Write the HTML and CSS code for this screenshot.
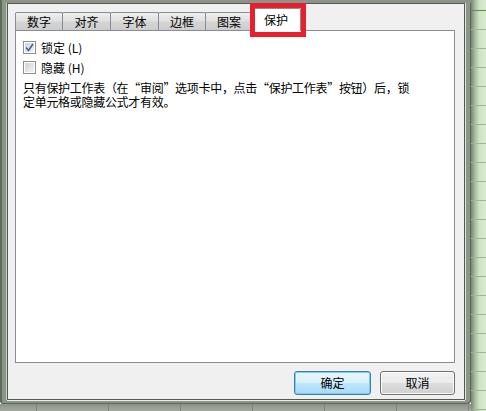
FILE: index.html
```html
<!DOCTYPE html>
<html lang="zh-CN">
<head>
<meta charset="utf-8">
<link rel="stylesheet" href="styles.css">
</head>
<body>
<div class="desk">
  <div class="window">
    <div class="client">
      <div class="tabs">
        <div class="tab t1">数字</div>
        <div class="tab t2">对齐</div>
        <div class="tab t3">字体</div>
        <div class="tab t4">边框</div>
        <div class="tab t5">图案</div>
        <div class="tab active">保护</div>
      </div>
      <div class="panel">
        <div class="check-row">
          <span class="box checked">
            <svg width="9" height="9" viewBox="0 0 9 9"><path d="M1 4.5 L3.5 7.5 L8 1" fill="none" stroke="#4a5d8e" stroke-width="1.6"/></svg>
          </span>
          <span class="label">锁定 (L)</span>
        </div>
        <div class="check-row">
          <span class="box"></span>
          <span class="label">隐藏 (H)</span>
        </div>
        <p class="note"><span class="line">只有保护工作表（在“审阅”选项卡中，点击“保护工作表”按钮）后，锁</span><span class="line">定单元格或隐藏公式才有效。</span></p>
      </div>
      <div class="buttons">
        <button class="btn default">确定</button>
        <button class="btn">取消</button>
      </div>
    </div>
    <div class="highlight"></div>
  </div>
  <div class="sheet"></div>
  <div class="strip"></div>
</div>
</body>
</html>
```

FILE: styles.css
```css
html, body {
  margin: 0;
  padding: 0;
}
body {
  width: 486px;
  height: 411px;
  overflow: hidden;
  font-family: "Noto Sans CJK SC", "Liberation Sans", sans-serif;
  font-size: 12px;
  color: #000;
}
.desk {
  display: grid;
  grid-template-columns: 471px 15px;
  grid-template-rows: 404px 7px;
  width: 486px;
  height: 411px;
}
.window {
  position: relative;
  grid-column: 1;
  grid-row: 1;
  box-sizing: border-box;
  padding: 3px 6px 4px 7px;
  background: #8a9686;
  box-shadow: inset 2px 0 0 #5e6a5b, inset 0 3px 0 #8d9389, inset -1px -1px 0 #5e665b;
  border-radius: 0 0 4px 4px;
}
.client {
  box-sizing: border-box;
  height: 397px;
  border: 1px solid #55594f;
  box-shadow: -1px 0 0 #c6cdc3, 1px 0 0 #dfe3dd, 0 1px 0 #e8ebe6;
  background: #f0f0f0;
  padding: 8px 9px 0 7px;
  display: flex;
  flex-direction: column;
}
.tabs {
  display: flex;
  height: 18px;
  align-items: flex-end;
  position: relative;
  z-index: 1;
}
.tab {
  box-sizing: border-box;
  height: 18px;
  border: 1px solid #898c95;
  border-bottom: none;
  margin-right: -1px;
  background: linear-gradient(#eeeeee, #e0e0e0 45%, #d4d4d4 55%, #cdcdcd);
  text-align: center;
  line-height: 18px;
  border-radius: 2px 2px 0 0;
}
.t1 { width: 48px; }
.t2 { width: 49px; }
.t3 { width: 49px; }
.t4 { width: 48px; }
.t5 { width: 48px; }
.tab.active {
  width: 50px;
  height: 23px;
  margin-left: -1px;
  margin-bottom: -1px;
  background: #fff;
  line-height: 22px;
}
.panel {
  box-sizing: border-box;
  height: 333px;
  border: 1px solid #898c95;
  background: #fff;
  padding: 10px 8px 0 7px;
}
.check-row {
  display: flex;
  align-items: center;
  height: 13px;
  margin-bottom: 7px;
}
.box {
  box-sizing: border-box;
  width: 13px;
  height: 13px;
  border: 1px solid #8e8f8f;
  background: linear-gradient(135deg, #cbcfd5, #f6f6f6);
  box-shadow: inset 0 0 0 1px #fff;
  display: flex;
  align-items: center;
  justify-content: center;
  margin-right: 5px;
}
.box svg { display: block; }
.label {
  line-height: 13px;
}
.note {
  margin: 0;
  line-height: 14px;
  letter-spacing: -0.3px;
  white-space: nowrap;
}
.line {
  display: block;
  height: 14px;
}
.buttons {
  display: flex;
  justify-content: flex-end;
  gap: 9px;
  margin-top: 8px;
}
.btn {
  box-sizing: border-box;
  width: 75px;
  height: 24px;
  border: 1px solid #707070;
  border-radius: 3px;
  background: linear-gradient(#f2f2f2, #ebebeb 48%, #dddddd 52%, #cfcfcf);
  box-shadow: inset 0 0 0 1px #fbfbfb;
  font-family: "Noto Sans CJK SC", sans-serif;
  font-size: 12px;
  color: #000;
  padding: 0;
  line-height: 22px;
}
.btn.default {
  width: 77px;
  border-color: #3c7fb1;
  background: linear-gradient(#eaf6fd, #d9f0fc 48%, #bee6fd 52%, #a7d9f5);
  box-shadow: inset 0 0 0 1px #7ecbef;
}
.highlight {
  position: absolute;
  left: 250px;
  top: 3px;
  width: 56px;
  height: 34px;
  box-sizing: border-box;
  border: 5px solid #e8202c;
  z-index: 2;
}
.sheet {
  grid-column: 2;
  grid-row: 1 / span 2;
  background:
    linear-gradient(to bottom, transparent 10px, #5e8c50 10px, #5e8c50 11px, transparent 11px),
    repeating-linear-gradient(to bottom, transparent 0, transparent 10px, #a3b29c 10px, #a3b29c 11px, transparent 11px, transparent 19px),
    linear-gradient(to right, #77846f, #a8b8a0 25%, #cfe3c2 55%, #d9ebcf);
}
.strip {
  grid-column: 1;
  grid-row: 2;
  background:
    repeating-linear-gradient(to right, transparent 0, transparent 36px, #7f857b 36px, #7f857b 37px, transparent 37px, transparent 72px),
    linear-gradient(#8c9288, #a4a99f);
}
```
